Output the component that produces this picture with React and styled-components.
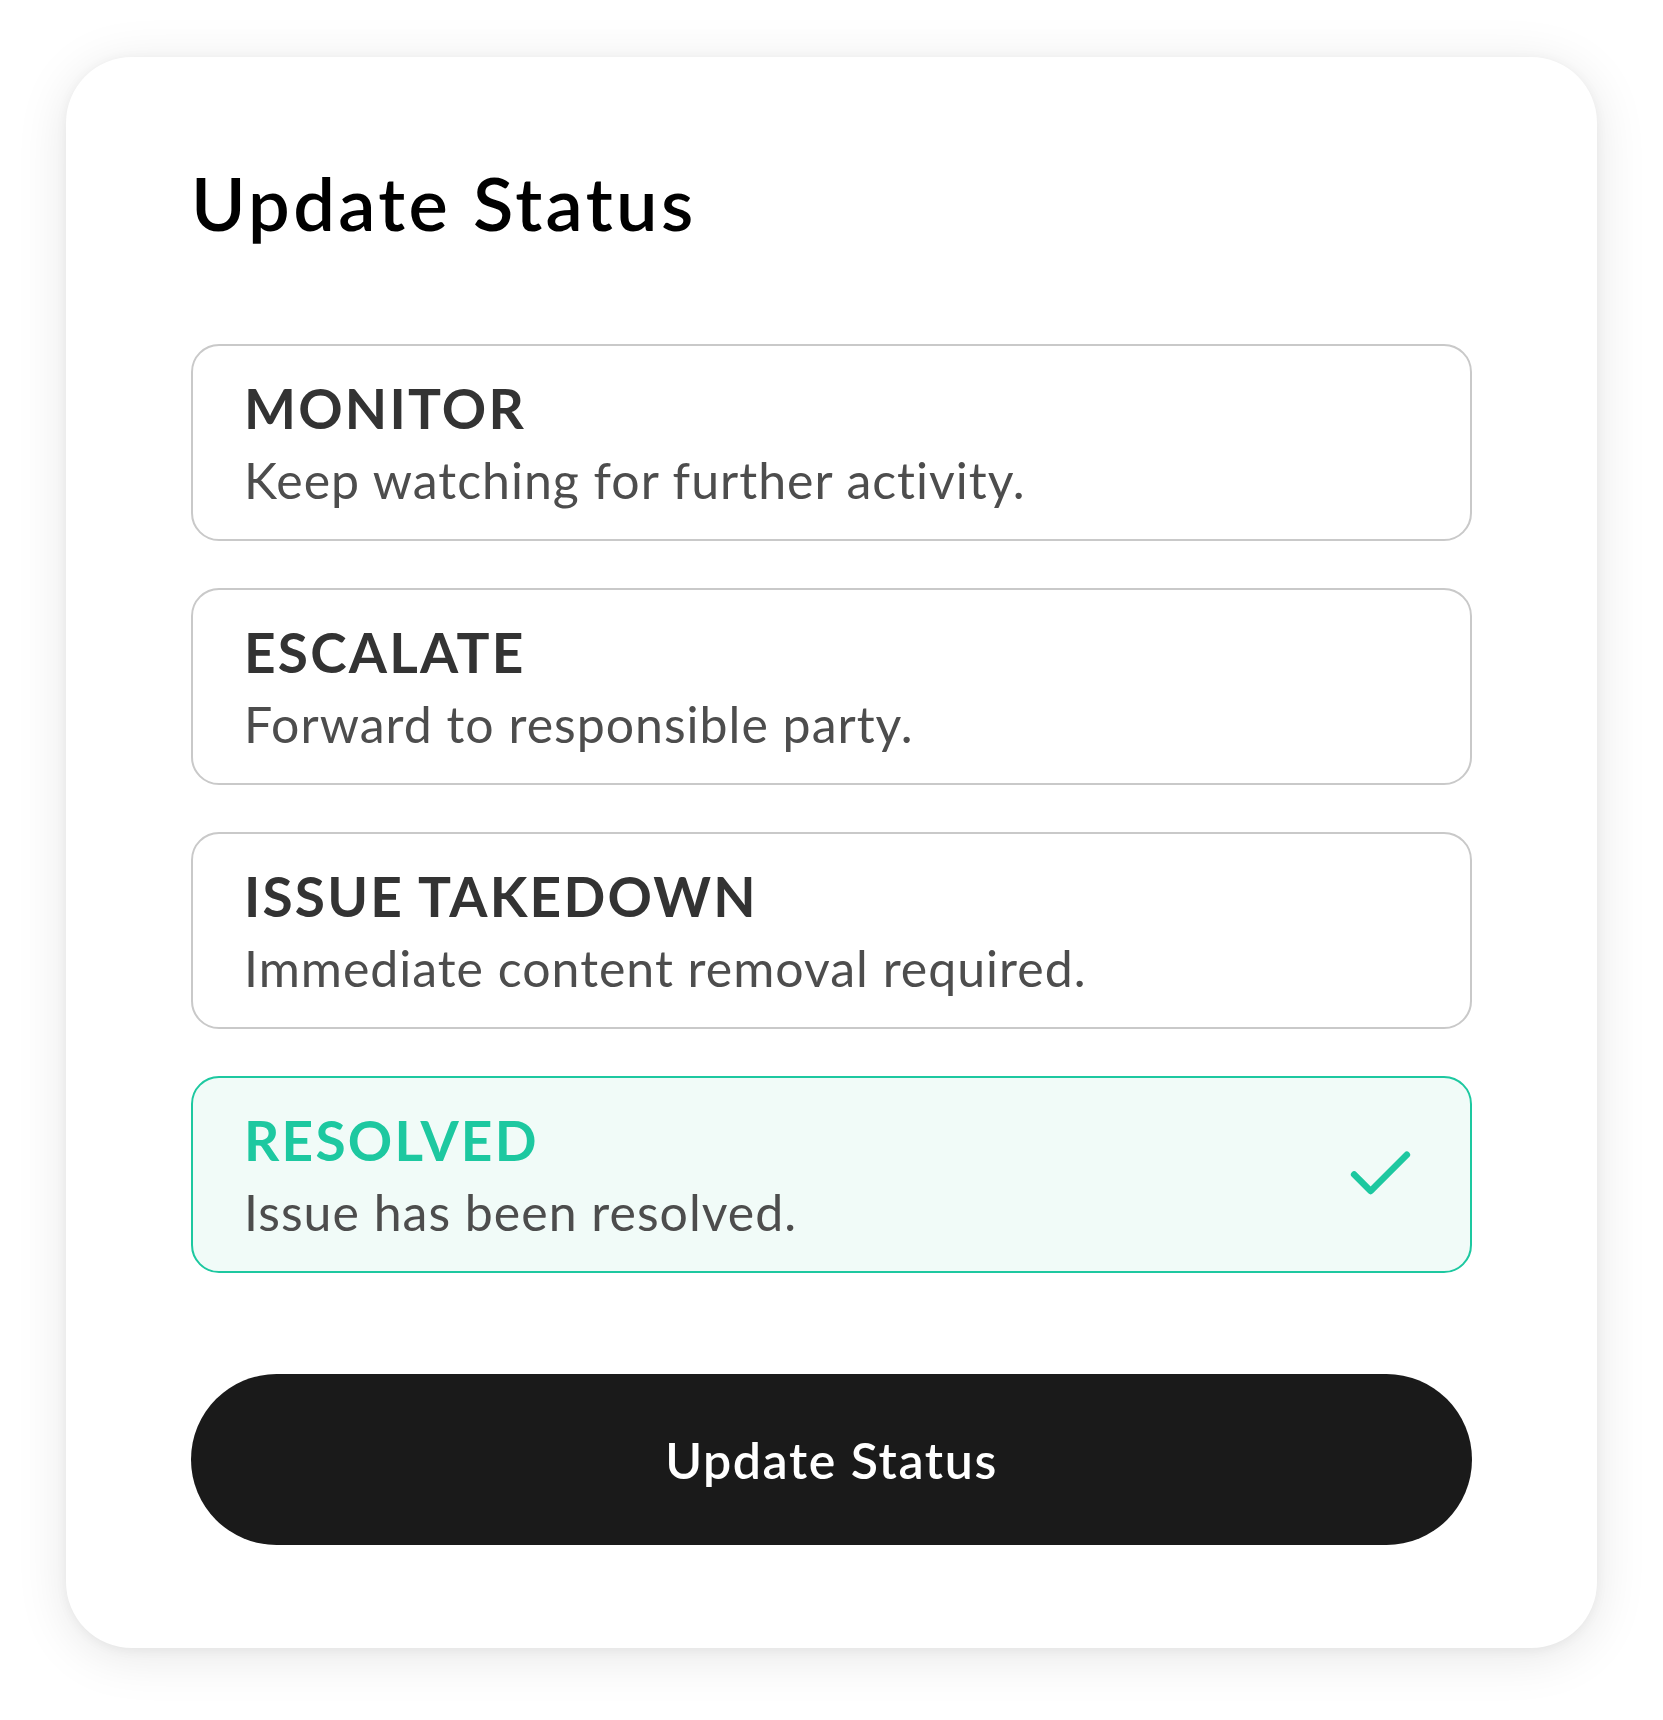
import React, { useState } from 'react'
import styled, { createGlobalStyle } from 'styled-components'
import { Check } from 'lucide-react'

const GlobalStyle = createGlobalStyle`
  html, body {
    margin: 0;
    padding: 0;
    background: #ffffff;
  }
  body {
    font-family: Lato, "Noto Sans", sans-serif;
    -webkit-font-smoothing: antialiased;
  }
`

const Page = styled.div`
  padding: 57px 66px 72px;
`

const Card = styled.div`
  background: #ffffff;
  border-radius: 66px;
  box-shadow: 0 8px 52px rgba(0, 0, 0, 0.1), 0 2px 12px rgba(0, 0, 0, 0.05);
  padding: 101px 125px 103px;
`

const Title = styled.h1`
  margin: 0;
  font-size: 74px;
  line-height: 90px;
  font-weight: 600;
  letter-spacing: 3.4px;
  color: #000000;
`

const OptionList = styled.div`
  display: flex;
  flex-direction: column;
  gap: 47px;
  margin-top: 96px;
`

const Option = styled.button`
  display: flex;
  align-items: center;
  justify-content: space-between;
  height: 197px;
  padding: 0 50px 0 51px;
  border: 2px solid ${p => (p.$active ? '#1dc8a0' : '#c9c9c9')};
  background: ${p => (p.$active ? '#f1fbf8' : '#ffffff')};
  border-radius: 28px;
  text-align: left;
  cursor: pointer;
  font-family: inherit;
`

const OptionText = styled.div`
  display: flex;
  flex-direction: column;
  gap: 6px;
`

const Label = styled.span`
  font-size: 55px;
  line-height: 68px;
  font-weight: 700;
  letter-spacing: 2.2px;
  color: ${p => (p.$active ? '#1dc8a0' : '#333333')};
`

const Desc = styled.span`
  font-size: 50px;
  line-height: 64px;
  font-weight: 400;
  letter-spacing: 1px;
  color: #4d4d4d;
`

const SubmitButton = styled.button`
  display: block;
  width: 100%;
  height: 171px;
  margin-top: 101px;
  border: none;
  border-radius: 86px;
  background: #1a1a1a;
  color: #ffffff;
  font-family: inherit;
  font-size: 50px;
  font-weight: 600;
  letter-spacing: 1.6px;
  cursor: pointer;
`

const options = [
  { id: 'monitor', label: 'MONITOR', desc: 'Keep watching for further activity.' },
  { id: 'escalate', label: 'ESCALATE', desc: 'Forward to responsible party.' },
  { id: 'takedown', label: 'ISSUE TAKEDOWN', desc: 'Immediate content removal required.' },
  { id: 'resolved', label: 'RESOLVED', desc: 'Issue has been resolved.' },
]

export default function App() {
  const [selected, setSelected] = useState('resolved')

  return (
    <Page>
      <GlobalStyle />
      <Card>
        <Title>Update Status</Title>
        <OptionList>
          {options.map(o => {
            const active = o.id === selected
            return (
              <Option key={o.id} $active={active} onClick={() => setSelected(o.id)}>
                <OptionText>
                  <Label $active={active}>{o.label}</Label>
                  <Desc>{o.desc}</Desc>
                </OptionText>
                {active && <Check size={79} strokeWidth={2} color="#1dc8a0" />}
              </Option>
            )
          })}
        </OptionList>
        <SubmitButton>Update Status</SubmitButton>
      </Card>
    </Page>
  )
}
